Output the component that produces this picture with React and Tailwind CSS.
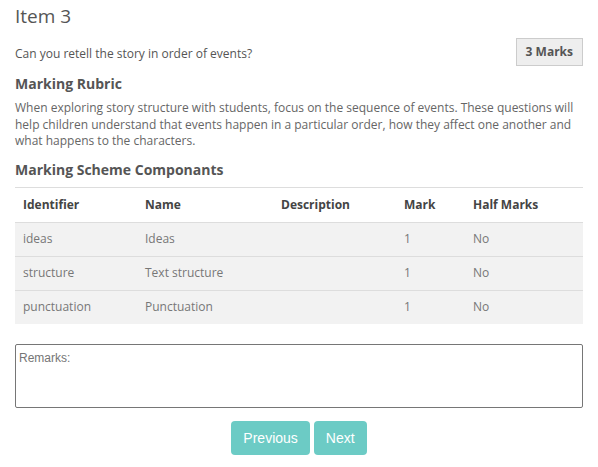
const rows = [
  { id: "ideas", name: "Ideas", description: "", mark: 1, half: "No" },
  { id: "structure", name: "Text structure", description: "", mark: 1, half: "No" },
  { id: "punctuation", name: "Punctuation", description: "", mark: 1, half: "No" },
];

const MarkingTable = ({ items }) => (
  <table className="w-full table-fixed border-collapse text-[12px]">
    <thead>
      <tr className="border-t border-[#dddddd] h-[35px] text-[#444]">
        <th className="w-[122px] px-2 text-left font-bold">Identifier</th>
        <th className="w-[136px] px-2 text-left font-bold">Name</th>
        <th className="w-[123px] px-2 text-left font-bold">Description</th>
        <th className="w-[69px] px-2 text-left font-bold">Mark</th>
        <th className="px-2 text-left font-bold">Half Marks</th>
      </tr>
    </thead>
    <tbody>
      {items.map(row => (
        <tr key={row.id} className="border-t border-[#dddddd] bg-[#f2f2f2] h-[34px] text-[#777]">
          <td className="px-2">{row.id}</td>
          <td className="px-2">{row.name}</td>
          <td className="px-2">{row.description}</td>
          <td className="px-2">{row.mark}</td>
          <td className="px-2">{row.half}</td>
        </tr>
      ))}
    </tbody>
  </table>
);

export default function App() {
  return (
    <div className="bg-white w-[598px] h-[467px] px-[15px] text-[#555] font-['Open_Sans',sans-serif]">
      <h1 className="pt-[4px] text-[19px] leading-[24px] text-[#555]">Item 3</h1>

      <div className="mt-[10px] flex items-center justify-between">
        <p className="text-[12px] leading-[17px] pt-[2px]">Can you retell the story in order of events?</p>
        <span className="h-[28px] px-[9px] flex items-center border border-[#cccccc] bg-[#eeeeee] text-[12px] font-bold text-[#555]">
          3 Marks
        </span>
      </div>

      <h2 className="mt-[8px] text-[14px] leading-[20px] font-bold text-[#555]">Marking Rubric</h2>
      <p className="mt-[6px] text-[12px] leading-[16.5px] text-[#666]">
        When exploring story structure with students, focus on the sequence of events. These questions will help children understand that events happen in a particular order, how they affect one another and what happens to the characters.
      </p>

      <h2 className="mt-[10px] text-[14px] leading-[20px] font-bold text-[#555]">Marking Scheme Componants</h2>
      <div className="mt-[7px]">
        <MarkingTable items={rows} />
      </div>

      <textarea
        placeholder="Remarks:"
        className="mt-[20px] block w-full h-[64px] resize-none border border-[#767676] rounded-[2px] px-[3px] py-[4px] text-[12px] font-['Liberation_Sans',sans-serif] placeholder:text-[#757575] outline-none"
      />

      <div className="mt-[13px] flex justify-center gap-[4px]">
        <button className="h-[34px] px-[12px] rounded-[4px] bg-[#6ccbc5] text-white text-[14px] font-['Liberation_Sans',sans-serif]">
          Previous
        </button>
        <button className="h-[34px] px-[12px] rounded-[4px] bg-[#6ccbc5] text-white text-[14px] font-['Liberation_Sans',sans-serif]">
          Next
        </button>
      </div>
    </div>
  );
}
